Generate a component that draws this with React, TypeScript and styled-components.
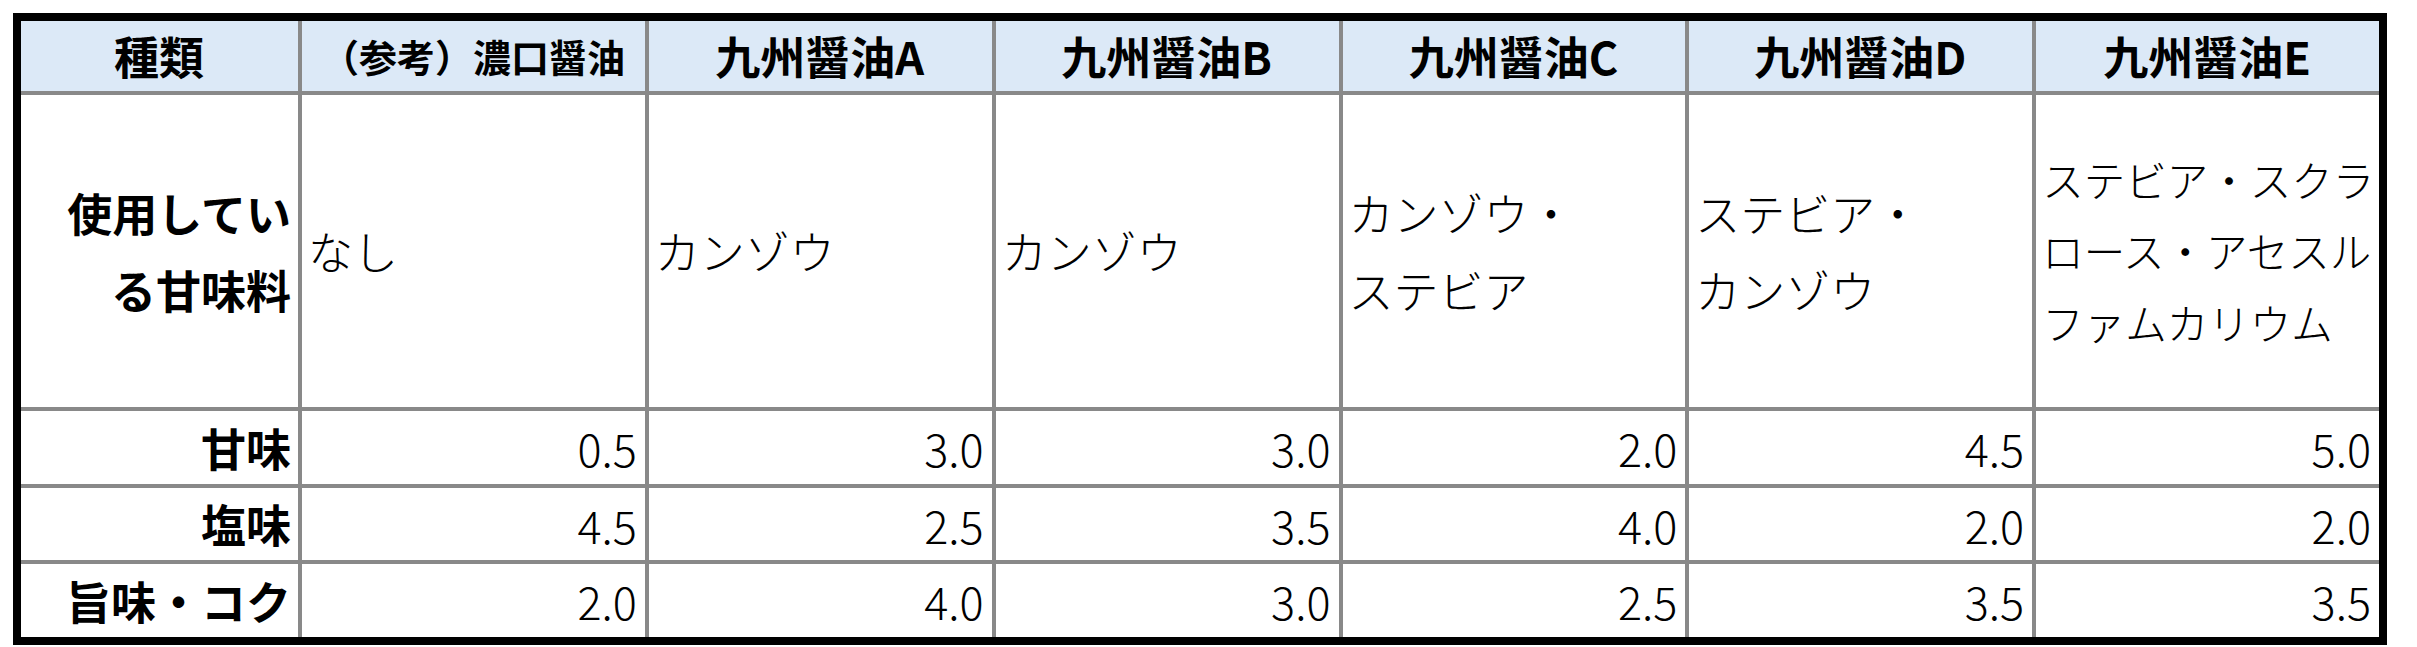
import React from 'react'
import styled, { createGlobalStyle } from 'styled-components'

const lineGrey = '#898989'
const headerBlue = '#dce9f7'

const GlobalStyle = createGlobalStyle`
  html, body {
    margin: 0;
    padding: 0;
    background: #ffffff;
  }
  body {
    font-family: 'Noto Sans CJK JP', 'Noto Sans', sans-serif;
    color: #000000;
  }
`

const Page = styled.div`
  padding: 13px;
`

const Grid = styled.div`
  box-sizing: border-box;
  width: 2374px;
  display: grid;
  grid-template-columns: 277px repeat(6, 1fr);
  grid-template-rows: 70px 312px 73px 72px 73px;
  gap: 4px;
  background: ${lineGrey};
  border: 8px solid #000000;
`

type Align = 'left' | 'center' | 'right'

const justify: Record<Align, string> = {
  left: 'flex-start',
  center: 'center',
  right: 'flex-end',
}

const Cell = styled.div<{ $align: Align; $head?: boolean }>`
  display: flex;
  align-items: center;
  justify-content: ${(p) => justify[p.$align]};
  text-align: ${(p) => p.$align};
  background: ${(p) => (p.$head ? headerBlue : '#ffffff')};
  padding: 0 7px 0 6px;
  overflow: hidden;
  min-width: 0;
`

const HeadText = styled.span<{ $size?: number }>`
  font-size: ${(p) => p.$size ?? 45}px;
  font-weight: 700;
  line-height: 1.72;
  white-space: nowrap;
`

const BodyText = styled.span<{ $size?: number }>`
  font-size: ${(p) => p.$size ?? 45}px;
  font-weight: 300;
  line-height: 1.72;
  white-space: nowrap;
`

const NumberText = styled.span`
  font-size: 45px;
  font-weight: 300;
  line-height: 1;
  padding-right: 1px;
`

type Product = {
  name: string
  nameSize?: number
  sweeteners: string[]
  sweetenerSize?: number
  sweet: string
  salty: string
  umami: string
}

const products: Product[] = [
  {
    name: '（参考）濃口醤油',
    nameSize: 38,
    sweeteners: ['なし'],
    sweet: '0.5',
    salty: '4.5',
    umami: '2.0',
  },
  {
    name: '九州醤油A',
    sweeteners: ['カンゾウ'],
    sweet: '3.0',
    salty: '2.5',
    umami: '4.0',
  },
  {
    name: '九州醤油B',
    sweeteners: ['カンゾウ'],
    sweet: '3.0',
    salty: '3.5',
    umami: '3.0',
  },
  {
    name: '九州醤油C',
    sweeteners: ['カンゾウ・', 'ステビア'],
    sweet: '2.0',
    salty: '4.0',
    umami: '2.5',
  },
  {
    name: '九州醤油D',
    sweeteners: ['ステビア・', 'カンゾウ'],
    sweet: '4.5',
    salty: '2.0',
    umami: '3.5',
  },
  {
    name: '九州醤油E',
    sweeteners: ['ステビア・スクラ', 'ロース・アセスル', 'ファムカリウム'],
    sweetenerSize: 41.5,
    sweet: '5.0',
    salty: '2.0',
    umami: '3.5',
  },
]

const lines = (parts: string[]) =>
  parts.map((part, i) => (
    <React.Fragment key={i}>
      {i > 0 && <br />}
      {part}
    </React.Fragment>
  ))

const scoreRows: { label: string; key: 'sweet' | 'salty' | 'umami' }[] = [
  { label: '甘味', key: 'sweet' },
  { label: '塩味', key: 'salty' },
  { label: '旨味・コク', key: 'umami' },
]

export default function App() {
  return (
    <Page>
      <GlobalStyle />
      <Grid>
        <Cell $align="center" $head>
          <HeadText>種類</HeadText>
        </Cell>
        {products.map((p) => (
          <Cell key={p.name} $align="center" $head>
            <HeadText $size={p.nameSize}>{p.name}</HeadText>
          </Cell>
        ))}

        <Cell $align="right">
          <HeadText>{lines(['使用してい', 'る甘味料'])}</HeadText>
        </Cell>
        {products.map((p) => (
          <Cell key={p.name} $align="left">
            <BodyText $size={p.sweetenerSize}>{lines(p.sweeteners)}</BodyText>
          </Cell>
        ))}

        {scoreRows.map((row) => (
          <React.Fragment key={row.key}>
            <Cell $align="right">
              <HeadText>{row.label}</HeadText>
            </Cell>
            {products.map((p) => (
              <Cell key={p.name} $align="right">
                <NumberText>{p[row.key]}</NumberText>
              </Cell>
            ))}
          </React.Fragment>
        ))}
      </Grid>
    </Page>
  )
}
